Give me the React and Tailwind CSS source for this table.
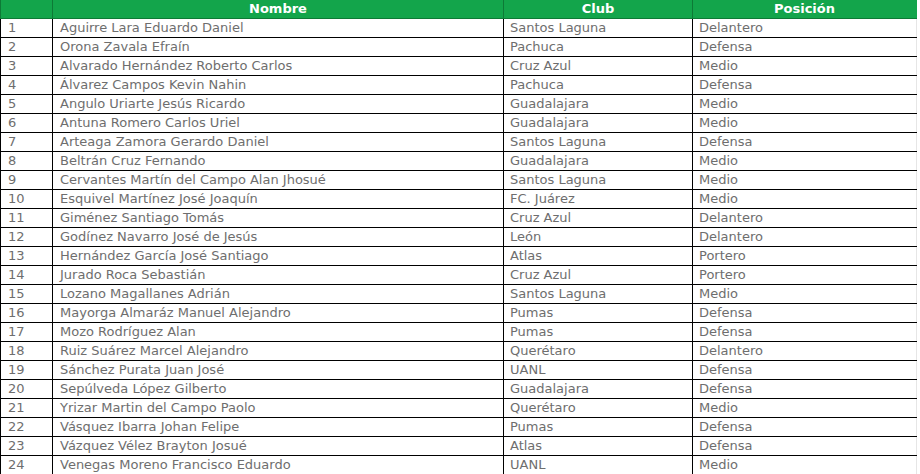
const rows = [
  ["1", "Aguirre Lara Eduardo Daniel", "Santos Laguna", "Delantero"],
  ["2", "Orona Zavala Efraín", "Pachuca", "Defensa"],
  ["3", "Alvarado Hernández Roberto Carlos", "Cruz Azul", "Medio"],
  ["4", "Álvarez Campos Kevin Nahin", "Pachuca", "Defensa"],
  ["5", "Angulo Uriarte Jesús Ricardo", "Guadalajara", "Medio"],
  ["6", "Antuna Romero Carlos Uriel", "Guadalajara", "Medio"],
  ["7", "Arteaga Zamora Gerardo Daniel", "Santos Laguna", "Defensa"],
  ["8", "Beltrán Cruz Fernando", "Guadalajara", "Medio"],
  ["9", "Cervantes Martín del Campo Alan Jhosué", "Santos Laguna", "Medio"],
  ["10", "Esquivel Martínez José Joaquín", "FC. Juárez", "Medio"],
  ["11", "Giménez Santiago Tomás", "Cruz Azul", "Delantero"],
  ["12", "Godínez Navarro José de Jesús", "León", "Delantero"],
  ["13", "Hernández García José Santiago", "Atlas", "Portero"],
  ["14", "Jurado Roca Sebastián", "Cruz Azul", "Portero"],
  ["15", "Lozano Magallanes Adrián", "Santos Laguna", "Medio"],
  ["16", "Mayorga Almaráz Manuel Alejandro", "Pumas", "Defensa"],
  ["17", "Mozo Rodríguez Alan", "Pumas", "Defensa"],
  ["18", "Ruiz Suárez Marcel Alejandro", "Querétaro", "Delantero"],
  ["19", "Sánchez Purata Juan José", "UANL", "Defensa"],
  ["20", "Sepúlveda López Gilberto", "Guadalajara", "Defensa"],
  ["21", "Yrizar Martin del Campo Paolo", "Querétaro", "Medio"],
  ["22", "Vásquez Ibarra Johan Felipe", "Pumas", "Defensa"],
  ["23", "Vázquez Vélez Brayton Josué", "Atlas", "Defensa"],
  ["24", "Venegas Moreno Francisco Eduardo", "UANL", "Medio"],
];

export default function App() {
  return (
    <div className="w-[920px] h-[474px] bg-white overflow-hidden" style={{ fontFamily: '"DejaVu Sans", Verdana, sans-serif' }}>
      <table className="w-[917px] border-collapse table-fixed text-[13px] leading-none">
        <colgroup>
          <col className="w-[52px]" />
          <col className="w-[451px]" />
          <col className="w-[189px]" />
          <col />
        </colgroup>
        <thead>
          <tr className="h-[18px] bg-[#13a54b] text-white font-bold">
            <th className="border border-[#0d7a36] border-t-0"></th>
            <th className="border border-[#0d7a36] border-t-0 text-center">Nombre</th>
            <th className="border border-[#0d7a36] border-t-0 text-center">Club</th>
            <th className="border border-[#0d7a36] border-t-0 border-r-[#13a54b] text-center">Posición</th>
          </tr>
        </thead>
        <tbody className="text-[#6e6e6e]">
          {rows.map((r) => (
            <tr key={r[0]} className="h-[19px]">
              <td className="border border-black pl-[7px]">{r[0]}</td>
              <td className="border border-black pl-[7px]">{r[1]}</td>
              <td className="border border-black pl-[6px]">{r[2]}</td>
              <td className="border border-black border-r-[#e6e6e6] pl-[6px]">{r[3]}</td>
            </tr>
          ))}
        </tbody>
      </table>
    </div>
  );
}
